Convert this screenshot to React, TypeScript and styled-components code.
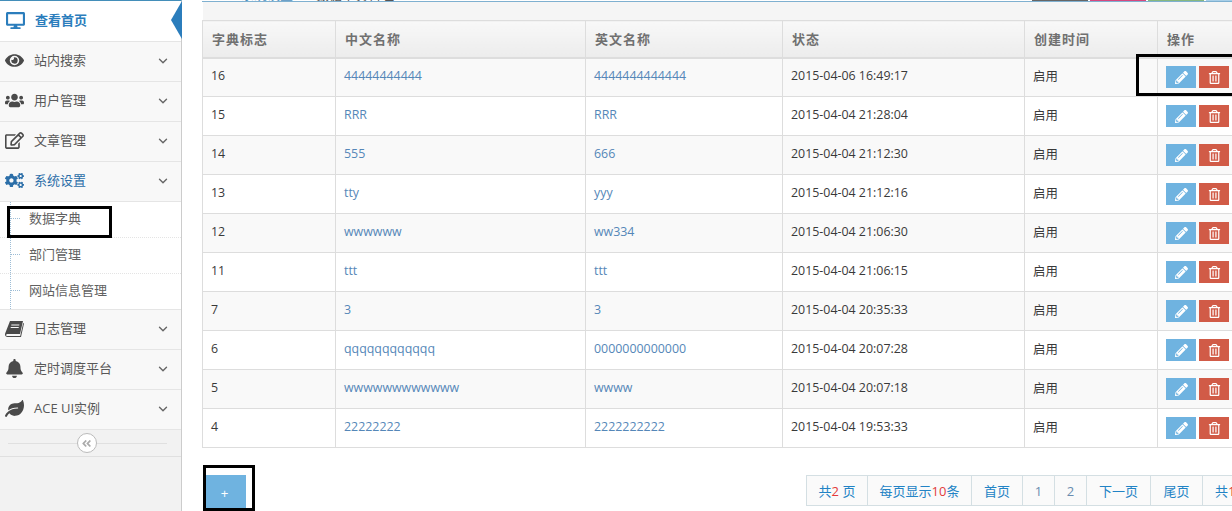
import React, { FC, ReactNode } from 'react';
import styled, { createGlobalStyle } from 'styled-components';
import {
  FaDesktop,
  FaEye,
  FaUsers,
  FaRegEdit,
  FaCogs,
  FaBell,
  FaLeaf,
  FaPencilAlt,
  FaRegTrashAlt,
  FaAngleDoubleLeft,
  FaHome,
} from 'react-icons/fa';
import { FiChevronDown } from 'react-icons/fi';

const GlobalStyle = createGlobalStyle`
  html, body {
    margin: 0;
    padding: 0;
    background: #fff;
  }
  body {
    font-family: "Open Sans", "Noto Sans CJK SC", sans-serif;
    font-size: 13px;
    color: #393939;
  }
`;

const Page = styled.div`
  position: relative;
  display: flex;
  width: 1232px;
  height: 511px;
  overflow: hidden;
`;

const Sidebar = styled.aside`
  flex: 0 0 182px;
  box-sizing: border-box;
  background: #f2f2f2;
  border-right: 1px solid #ccc;
  border-top: 1px solid #438eb9;
`;

const HomeItem = styled.div`
  position: relative;
  display: flex;
  align-items: center;
  height: 41px;
  padding: 0 0 2px 1px;
  background: #fff;
  border-bottom: 1px solid #e5e5e5;
  color: #2b7dbc;
  font-weight: 700;
  box-sizing: border-box;
  &::after {
    content: '';
    position: absolute;
    right: -1px;
    top: 0;
    border-style: solid;
    border-width: 19px 11px 19px 0;
    border-color: transparent #2b7dbc transparent transparent;
  }
`;

const MenuItem = styled.div<{ $active?: boolean }>`
  display: flex;
  align-items: center;
  height: 40px;
  padding-bottom: 2px;
  box-sizing: border-box;
  background: #f8f8f8;
  border-bottom: 1px solid #e5e5e5;
  color: ${(p) => (p.$active ? '#2b6ea8' : '#585858')};
`;

const IconSlot = styled.span<{ $color?: string }>`
  flex: 0 0 34px;
  display: flex;
  justify-content: center;
  padding-right: 5px;
  box-sizing: border-box;
  font-size: 19px;
  color: ${(p) => p.$color || '#4a4a4a'};
`;

const Label = styled.span`
  flex: 1;
  padding-bottom: 2px;
  white-space: nowrap;
`;

const Chevron = styled(FiChevronDown)`
  flex: 0 0 auto;
  margin-right: 11px;
  font-size: 14px;
  color: #666;
  stroke-width: 2.4;
`;

const SubMenu = styled.div`
  position: relative;
  background: #fff;
  border-bottom: 1px solid #e5e5e5;
  &::before {
    content: '';
    position: absolute;
    left: 10px;
    top: 0;
    bottom: 0;
    border-left: 1px dotted #9dbdd6;
  }
`;

const SubItem = styled.div`
  position: relative;
  display: flex;
  align-items: center;
  height: 36px;
  box-sizing: border-box;
  padding: 0 0 4px 29px;
  color: #616161;
  border-bottom: 1px dotted #e4e4e4;
  &:last-child {
    border-bottom: none;
    height: 35px;
  }
  &::before {
    content: '';
    position: absolute;
    left: 11px;
    top: 16px;
    width: 9px;
    border-top: 1px dotted #9dbdd6;
  }
`;

const Collapse = styled.div`
  position: relative;
  display: flex;
  align-items: center;
  justify-content: center;
  height: 27px;
  box-sizing: border-box;
  border-bottom: 1px solid #e0e0e0;
  padding-right: 8px;
  &::before {
    content: '';
    position: absolute;
    left: 8px;
    right: 14px;
    top: 13px;
    border-top: 1px solid #e0e0e0;
  }
`;

const CollapseBtn = styled.span`
  position: relative;
  display: flex;
  align-items: center;
  justify-content: center;
  width: 18px;
  height: 18px;
  border: 1px solid #bbb;
  border-radius: 50%;
  background: #fff;
  color: #aaa;
  font-size: 11px;
`;

const Main = styled.main`
  flex: 1;
  min-width: 0;
  padding-left: 20px;
`;

const Crumbs = styled.div`
  display: flex;
  height: 2px;
  overflow: hidden;
  box-sizing: border-box;
  border-bottom: 1px solid #7fb0d0;
`;

const CrumbTrail = styled.div`
  flex: 1;
  display: flex;
  gap: 23px;
  height: 12px;
  margin-top: -12px;
  padding-left: 20px;
  font-size: 13px;
  line-height: 14px;
  color: #555;
`;

const CrumbLink = styled.span`
  display: flex;
  align-items: center;
  gap: 6px;
  color: #4c8fbd;
`;

const Shortcuts = styled.div`
  display: flex;
  gap: 2px;
  height: 1px;
  width: 200px;
`;

const Shortcut = styled.span<{ $color: string }>`
  flex: 0 0 56px;
  background: ${(p) => p.$color};
`;

const Band = styled.div`
  height: 18px;
  margin-left: 1px;
  background: #f5f5f5;
`;

const Table = styled.table`
  width: 1060px;
  table-layout: fixed;
  border-collapse: collapse;
`;

const Th = styled.th<{ $w: number }>`
  width: ${(p) => p.$w}px;
  height: 37px;
  padding: 0 9px;
  box-sizing: border-box;
  text-align: left;
  font-size: 13px;
  letter-spacing: 1px;
  font-weight: 700;
  color: #707070;
  background: linear-gradient(#f8f8f8, #ececec);
  border: 1px solid #ddd;
  border-bottom: 2px solid #ddd;
`;

const Row = styled.tr`
  &:nth-child(odd) {
    background: #f9f9f9;
  }
`;

const Td = styled.td`
  height: 39px;
  padding: 0 8px 3px;
  box-sizing: border-box;
  font-size: 12.4px;
  color: #393939;
  border: 1px solid #ddd;
  white-space: nowrap;
`;

const LinkText = styled.a`
  color: #5587b8;
`;

const Actions = styled.div`
  display: flex;
  gap: 3px;
  margin-top: 3px;
`;

const IconButton = styled.button<{ $bg: string }>`
  display: flex;
  align-items: center;
  justify-content: center;
  width: 30px;
  height: 22px;
  padding: 0;
  border: none;
  background: ${(p) => p.$bg};
  color: #fff;
  font-size: 13px;
`;

const Footer = styled.div`
  display: flex;
  margin-top: 27px;
`;

const AddButton = styled.button`
  flex: 0 0 43px;
  height: 36px;
  margin-left: 1px;
  padding: 0;
  border: none;
  background: #6fb3e0;
  color: #fff;
  font-size: 13px;
`;

const Pager = styled.div`
  flex: 0 0 auto;
  display: flex;
  height: 31px;
  margin-left: 560px;
  white-space: nowrap;
  background: #fafafa;
  border: 1px solid #d4dfe3;
  border-right: none;
  box-sizing: border-box;
`;

const PagerCell = styled.span<{ $w: number; $num?: boolean }>`
  display: flex;
  align-items: center;
  justify-content: center;
  width: ${(p) => p.$w}px;
  box-sizing: border-box;
  border-right: 1px solid #d4dfe3;
  color: ${(p) => (p.$num ? '#6a8caf' : '#2283c5')};
`;

const Red = styled.span`
  color: #e23b3b;
`;

const Mark = styled.div<{ $x: number; $y: number; $w: number; $h: number }>`
  position: absolute;
  left: ${(p) => p.$x}px;
  top: ${(p) => p.$y}px;
  width: ${(p) => p.$w}px;
  height: ${(p) => p.$h}px;
  box-sizing: border-box;
  border: 3px solid #000;
  pointer-events: none;
`;

// slanted book, the package one stands upright
const BookIcon: FC = () => (
  <svg width="19" height="18" viewBox="0 0 19 18" fill="currentColor">
    <path d="M5 1h13l-3 13H2.4C1.2 14 1 15 1.2 15.4c.3.6 1 .6 1.6.6h12.4l3-13 .8.6-3 13.4H2.6C1 17 0 16 0 14.6c0-.5.1-1 .3-1.5z" />
    <path d="M6.4 4.5h8l-.2 1h-8zM5.8 7h8l-.2 1h-8z" fill="#f8f8f8" />
  </svg>
);

interface MenuRow {
  icon: ReactNode;
  label: string;
  active?: boolean;
}

const topMenus: MenuRow[] = [
  { icon: <FaEye />, label: '站内搜索' },
  { icon: <FaUsers />, label: '用户管理' },
  { icon: <FaRegEdit />, label: '文章管理' },
  { icon: <FaCogs />, label: '系统设置', active: true },
];

const bottomMenus: MenuRow[] = [
  { icon: <BookIcon />, label: '日志管理' },
  { icon: <FaBell />, label: '定时调度平台' },
  { icon: <FaLeaf />, label: 'ACE UI实例' },
];

const subMenus = ['数据字典', '部门管理', '网站信息管理'];

const rows = [
  ['16', '44444444444', '4444444444444', '2015-04-06 16:49:17'],
  ['15', 'RRR', 'RRR', '2015-04-04 21:28:04'],
  ['14', '555', '666', '2015-04-04 21:12:30'],
  ['13', 'tty', 'yyy', '2015-04-04 21:12:16'],
  ['12', 'wwwwww', 'ww334', '2015-04-04 21:06:30'],
  ['11', 'ttt', 'ttt', '2015-04-04 21:06:15'],
  ['7', '3', '3', '2015-04-04 20:35:33'],
  ['6', 'qqqqqqqqqqqq', '0000000000000', '2015-04-04 20:07:28'],
  ['5', 'wwwwwwwwwwww', 'wwww', '2015-04-04 20:07:18'],
  ['4', '22222222', '2222222222', '2015-04-04 19:53:33'],
];

const renderMenu = (m: MenuRow) => (
  <MenuItem key={m.label} $active={m.active}>
    <IconSlot $color={m.active ? '#2b6ea8' : undefined}>{m.icon}</IconSlot>
    <Label>{m.label}</Label>
    <Chevron />
  </MenuItem>
);

const App: FC = () => (
  <Page>
    <GlobalStyle />
    <Sidebar>
      <HomeItem>
        <IconSlot $color="#2b7dbc">
          <FaDesktop />
        </IconSlot>
        <Label>查看首页</Label>
      </HomeItem>
      {topMenus.map(renderMenu)}
      <SubMenu>
        {subMenus.map((s) => (
          <SubItem key={s}>{s}</SubItem>
        ))}
      </SubMenu>
      {bottomMenus.map(renderMenu)}
      <Collapse>
        <CollapseBtn>
          <FaAngleDoubleLeft />
        </CollapseBtn>
      </Collapse>
    </Sidebar>
    <Main>
      <Crumbs>
        <CrumbTrail>
          <CrumbLink>
            <FaHome color="#555" />
            系统设置
          </CrumbLink>
          <span>数据字典管理</span>
        </CrumbTrail>
        <Shortcuts>
          <Shortcut $color="#666" />
          <Shortcut $color="#d6487e" />
          <Shortcut $color="#87b87f" />
          <Shortcut $color="#a8cfe8" />
        </Shortcuts>
      </Crumbs>
      <Band />
      <Table>
        <thead>
          <tr>
            <Th $w={133}>字典标志</Th>
            <Th $w={250}>中文名称</Th>
            <Th $w={197}>英文名称</Th>
            <Th $w={242}>状态</Th>
            <Th $w={133}>创建时间</Th>
            <Th $w={105}>操作</Th>
          </tr>
        </thead>
        <tbody>
          {rows.map((r) => (
            <Row key={r[0]}>
              <Td>{r[0]}</Td>
              <Td>
                <LinkText>{r[1]}</LinkText>
              </Td>
              <Td>
                <LinkText>{r[2]}</LinkText>
              </Td>
              <Td>{r[3]}</Td>
              <Td>启用</Td>
              <Td>
                <Actions>
                  <IconButton $bg="#6fb3e0">
                    <FaPencilAlt />
                  </IconButton>
                  <IconButton $bg="#d15b47">
                    <FaRegTrashAlt />
                  </IconButton>
                </Actions>
              </Td>
            </Row>
          ))}
        </tbody>
      </Table>
      <Footer>
        <AddButton>+</AddButton>
        <Pager>
          <PagerCell $w={61}>
            共<Red>2</Red>&nbsp;页
          </PagerCell>
          <PagerCell $w={104}>
            每页显示<Red>10</Red>条
          </PagerCell>
          <PagerCell $w={51}>首页</PagerCell>
          <PagerCell $w={32} $num>
            1
          </PagerCell>
          <PagerCell $w={32} $num>
            2
          </PagerCell>
          <PagerCell $w={64}>下一页</PagerCell>
          <PagerCell $w={52}>尾页</PagerCell>
          <PagerCell $w={66}>
            共<Red>13</Red>条
          </PagerCell>
        </Pager>
      </Footer>
    </Main>
    <Mark $x={7} $y={206} $w={105} $h={32} />
    <Mark $x={1136} $y={54} $w={100} $h={42} />
    <Mark $x={203} $y={465} $w={52} $h={46} />
  </Page>
);

export default App;
